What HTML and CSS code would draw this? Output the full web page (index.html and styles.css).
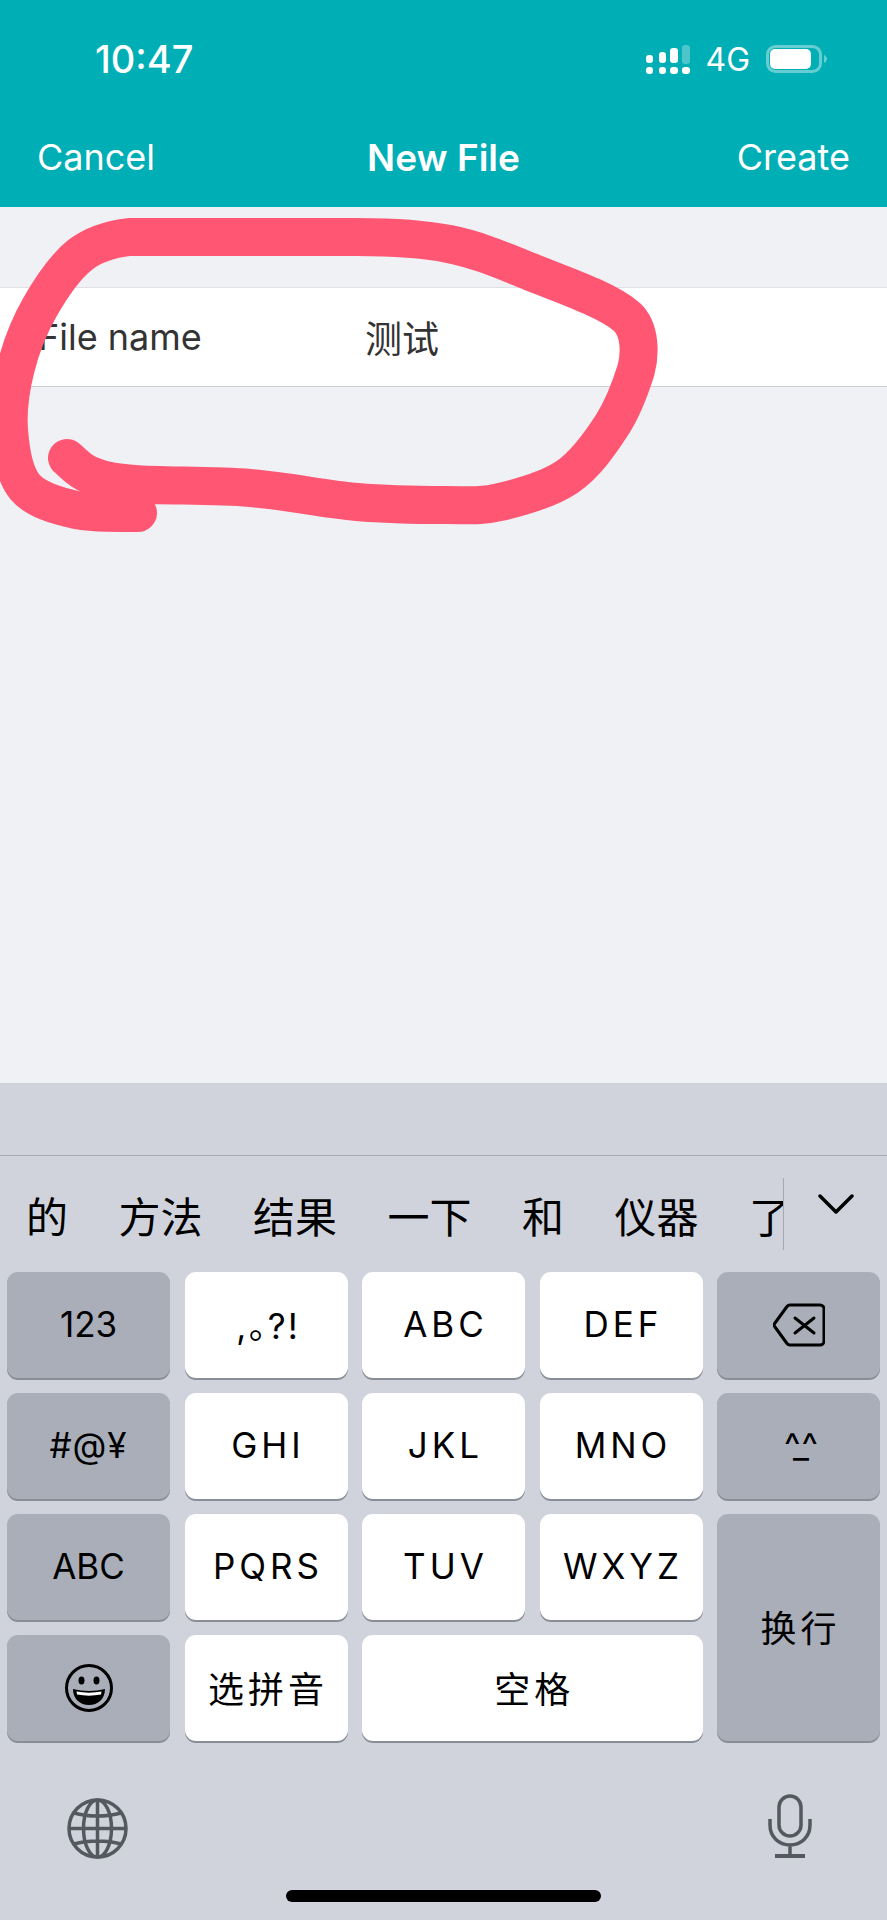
FILE: index.html
```html
<!DOCTYPE html>
<html lang="zh-CN">
  <head>
    <meta charset="UTF-8" />
    <meta name="viewport" content="width=device-width, initial-scale=1.0" />
    <title>New File</title>
    <link rel="stylesheet" href="styles.css">
  </head>
  <body>
    <div class="screen">
      <div class="header">
        <div class="status-bar">
          <span class="time">10:47</span>
          <div class="status-icons">
            <svg class="signal" width="44" height="29" viewBox="0 0 44 29" fill="#fff">
              <rect x="0" y="10" width="7" height="8" rx="3"/>
              <rect x="13" y="7" width="7" height="11" rx="3"/>
              <rect x="24" y="3" width="8" height="15" rx="3"/>
              <rect x="36" y="0" width="8" height="19" rx="3" opacity="0.3"/>
              <rect x="0" y="22" width="7" height="7" rx="3"/>
              <rect x="13" y="22" width="7" height="7" rx="3"/>
              <rect x="24" y="22" width="8" height="7" rx="3"/>
              <rect x="36" y="22" width="8" height="7" rx="3"/>
            </svg>
            <span class="network">4G</span>
            <svg class="battery" width="61" height="28" viewBox="0 0 61 28">
              <rect x="1.5" y="1.5" width="53" height="25" rx="8" fill="none" stroke="#fff" stroke-opacity="0.4" stroke-width="3"/>
              <rect x="4" y="4" width="41" height="20" rx="5" fill="#fff"/>
              <path d="M58 10c2 1 3 2.5 3 4s-1 3-3 4z" fill="#fff" fill-opacity="0.4"/>
            </svg>
          </div>
        </div>
        <div class="nav-bar">
          <span class="nav-left">Cancel</span>
          <span class="nav-title">New File</span>
          <span class="nav-right">Create</span>
        </div>
      </div>

      <div class="content">
        <div class="form-row">
          <span class="form-label">File name</span>
          <span class="form-value">测试</span>
        </div>
      </div>

      <div class="keyboard">
        <div class="composing"></div>
        <div class="candidates">
          <div class="candidate-list">
            <span>的</span>
            <span>方法</span>
            <span>结果</span>
            <span>一下</span>
            <span>和</span>
            <span>仪器</span>
            <span>了</span>
          </div>
          <svg class="chevron" width="36" height="20" viewBox="0 0 36 20" fill="none" stroke="#000" stroke-width="3.5" stroke-linecap="round" stroke-linejoin="round">
            <path d="M2 2l16 16L34 2"/>
          </svg>
        </div>

        <div class="keys">
          <div class="key key-dark key-plain">123</div>
          <div class="key key-punct">,。?!</div>
          <div class="key">ABC</div>
          <div class="key">DEF</div>
          <div class="key key-dark key-icon">
            <svg width="52" height="44" viewBox="0 0 52 44" fill="none" stroke="#000" stroke-width="3" stroke-linejoin="round" stroke-linecap="round">
              <path d="M17 2H47a4 4 0 0 1 4 4V38a4 4 0 0 1-4 4H17a4 4 0 0 1-3-1.5L2 24a3 3 0 0 1 0-4L14 3.5A4 4 0 0 1 17 2z"/>
              <path d="M22 15l19 15M41 15L22 30"/>
            </svg>
          </div>

          <div class="key key-dark key-plain key-symbols">#@¥</div>
          <div class="key">GHI</div>
          <div class="key">JKL</div>
          <div class="key">MNO</div>
          <div class="key key-dark key-face">^_^</div>

          <div class="key key-dark key-plain">ABC</div>
          <div class="key">PQRS</div>
          <div class="key">TUV</div>
          <div class="key">WXYZ</div>
          <div class="key key-dark key-return key-cjk">换行</div>

          <div class="key key-dark key-icon">
            <svg width="48" height="48" viewBox="0 0 48 48">
              <circle cx="24" cy="24" r="22.5" fill="none" stroke="#000" stroke-width="3"/>
              <ellipse cx="16.5" cy="16.5" rx="3" ry="4"/>
              <ellipse cx="31.5" cy="16.5" rx="3" ry="4"/>
              <path d="M8 25c10 2.5 22 2.5 32 0 0 10-7 16-16 16S8 35 8 25z"/>
              <path d="M11.5 27.5c8 1.5 17 1.5 25 0l-.5 3c-8 1.5-16 1.5-24 0z" fill="#fff"/>
            </svg>
          </div>
          <div class="key key-cjk">选拼音</div>
          <div class="key key-wide key-cjk">空格</div>
        </div>

        <div class="keyboard-tools">
          <svg class="globe" width="61" height="61" viewBox="0 0 61 61" fill="none" stroke="#54585f" stroke-width="3.5">
            <circle cx="30.5" cy="30.5" r="28.5"/>
            <ellipse cx="30.5" cy="30.5" rx="14" ry="28.5"/>
            <path d="M30.5 2v57M2 30.5h57M7 15c14 4 33 4 47 0M7 46c14-4 33-4 47 0"/>
          </svg>
          <svg class="mic" width="44" height="64" viewBox="0 0 44 64" fill="none" stroke="#54585f" stroke-width="3.5">
            <rect x="11" y="2" width="22" height="40" rx="11"/>
            <path d="M2 25v6c0 12 9 20 20 20s20-8 20-20v-6M22 51v10"/>
            <path d="M7 62h30" stroke-width="4"/>
          </svg>
        </div>
        <div class="home-bar"></div>
      </div>

      <!-- hand drawn marker over the form row -->
      <svg class="marker" width="887" height="600" viewBox="0 0 887 600" fill="none" stroke="#ff5773" stroke-width="38" stroke-linecap="round" stroke-linejoin="round">
        <path d="M67 458C70.8 460.8 78.8 470.7 90 475C101.2 479.3 107.3 481.8 134 484C160.7 486.2 212.8 485 250 488C287.2 491 324.3 499.2 357 502C389.7 504.8 422.2 505 446 505C469.8 505 479.8 506.7 500 502C520.2 497.3 548.3 489.8 567 477C585.7 464.2 600.5 442.8 612 425C623.5 407.2 631.7 383.8 636 370C640 355 641 330 627 317C608 300 560.5 283.8 531 272C501.5 260.2 478 249.8 449 244C420 238.2 382 237 357 237L129 237C113 239 94.8 243.3 80 255C65.2 266.7 50.7 288.3 40 307C29.3 325.7 21.2 346.5 16 367C10.8 387.5 7.5 410 9 430C10.5 450 13.8 473.7 25 487C36.2 500.3 57.2 505.7 76 510C94.8 514.3 127.7 512.5 138 513"/>
      </svg>
    </div>
  </body>
</html>
```

FILE: styles.css
```css
* {
  margin: 0;
  padding: 0;
  box-sizing: border-box;
  font-family: Inter, "Noto Sans CJK SC", sans-serif;
}

body {
  background-color: #eff1f5;
}

.screen {
  position: relative;
  display: flex;
  flex-direction: column;
  width: 887px;
  height: 1920px;
  overflow: hidden;
}

.header {
  height: 207px;
  background-color: #00aeb5;
  color: white;
}

.status-bar {
  display: flex;
  align-items: center;
  justify-content: space-between;
  height: 118px;
  padding: 0 60px 0 95px;
}

.time {
  font-size: 38px;
  font-weight: 500;
}

.status-icons {
  display: flex;
  align-items: center;
}

.network {
  margin: 0 16px 0 15px;
  font-size: 32px;
}

.nav-bar {
  display: grid;
  grid-template-columns: 1fr auto 1fr;
  align-items: center;
  height: 78px;
  padding: 0 37px;
  font-size: 36px;
}

.nav-title {
  font-size: 37px;
  font-weight: 600;
}

.nav-right {
  text-align: right;
}

.content {
  flex: 1;
  padding-top: 80px;
}

.form-row {
  display: flex;
  align-items: center;
  height: 100px;
  padding-left: 38px;
  background-color: white;
  border-top: 1px solid #e0e1e4;
  border-bottom: 1px solid #cfd0d3;
  color: #333;
  font-size: 36px;
}

.form-label {
  width: 327px;
}

.form-value {
  font-size: 37px;
}

.keyboard {
  height: 837px;
  background-color: #d0d3dc;
}

.composing {
  height: 73px;
  border-bottom: 1px solid #a6a9b0;
}

.candidates {
  display: flex;
  align-items: center;
  height: 116px;
  padding-left: 26px;
}

.candidate-list {
  display: flex;
  align-items: center;
  gap: 50.5px;
  width: 758px;
  height: 72px;
  overflow: hidden;
  border-right: 1px solid #a6a9b0;
  font-size: 42px;
  white-space: nowrap;
}

.chevron {
  margin: -20px 0 0 34px;
}

.keys {
  display: grid;
  grid-template-columns: repeat(5, 1fr);
  grid-auto-rows: 106px;
  gap: 15px 14.5px;
  padding: 0 7px;
}

.key {
  display: flex;
  align-items: center;
  justify-content: center;
  padding: 0 0 3px 4px;
  background-color: white;
  border-radius: 11px;
  box-shadow: 0 2px 0 #898d96;
  color: #000;
  font-size: 35px;
  letter-spacing: 4px;
}

.key-dark {
  background-color: #a9aeb9;
}

.key-plain {
  padding-left: 0;
  letter-spacing: 0;
}

.key-icon {
  padding: 0;
}

.key-symbols {
  letter-spacing: 1px;
}

.key-punct {
  font-feature-settings: "palt";
  letter-spacing: 2px;
}

.key-face {
  padding-left: 0;
  letter-spacing: -5px;
}

.key-return {
  grid-row: span 2;
}

.key-wide {
  grid-column: span 2;
}

.key-cjk {
  font-size: 36px;
}

.keyboard-tools {
  display: flex;
  align-items: flex-start;
  justify-content: space-between;
  height: 117px;
  padding: 53px 75px 0 67px;
}

.globe {
  margin-top: 4px;
}

.home-bar {
  width: 315px;
  height: 12px;
  margin: 32px auto 0;
  background-color: #000;
  border-radius: 6px;
}

.marker {
  position: absolute;
  top: 0;
  left: 0;
}
```
